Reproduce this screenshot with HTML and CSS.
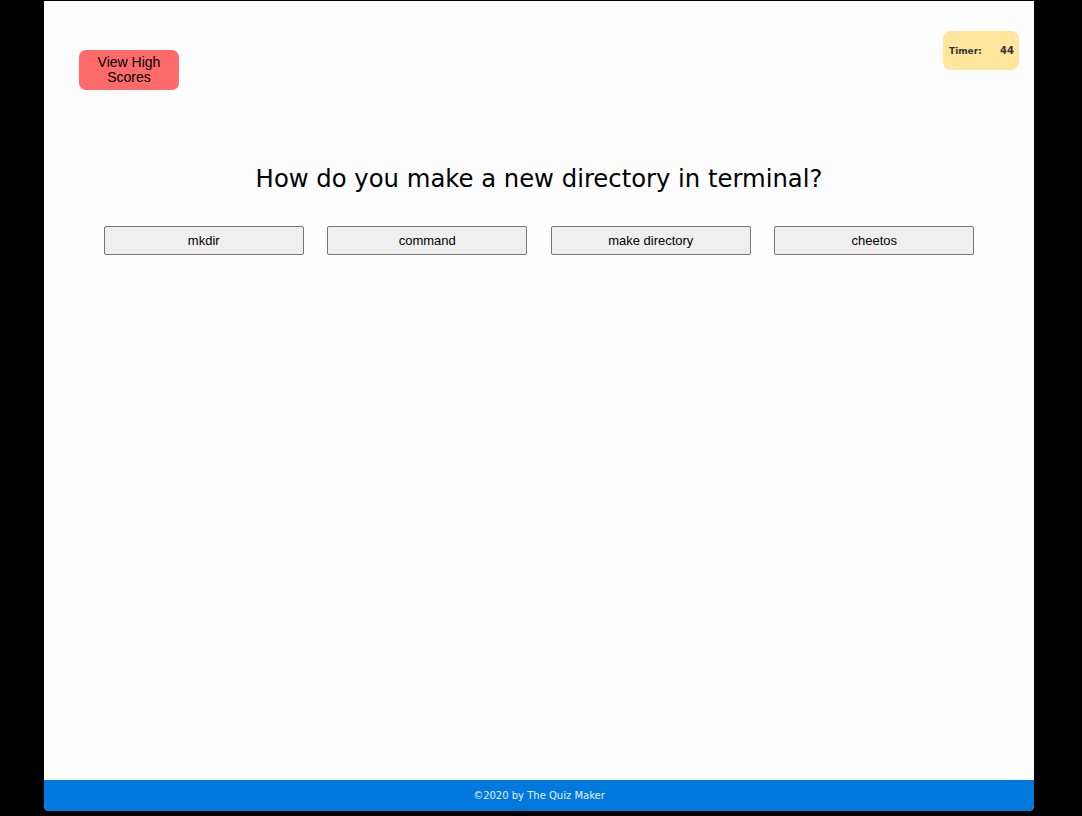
FILE: index.html
```html
<!DOCTYPE html>
<html>
<head>
<meta charset="utf-8">
<link rel="stylesheet" href="styles.css">
</head>
<body>
<div class="page">
  <main class="main">
    <header class="top">
      <button class="scores">View High<br>Scores</button>
      <div class="timer"><span>Timer:</span><span>44</span></div>
    </header>
    <h1 class="question">How do you make a new directory in terminal?</h1>
    <div class="answers">
      <button class="answer">mkdir</button>
      <button class="answer">command</button>
      <button class="answer">make directory</button>
      <button class="answer">cheetos</button>
    </div>
  </main>
  <footer class="footer">©2020 by The Quiz Maker</footer>
</div>
</body>
</html>
```
FILE: styles.css
```css
html, body { margin: 0; padding: 0; }
body { background: #000; height: 816px; overflow: hidden; }
.page {
  margin: 1px 0 0 44px;
  width: 990px;
  height: 810px;
  background: #fdfdfd;
  display: flex;
  flex-direction: column;
  border-radius: 0 0 5px 5px;
  overflow: hidden;
}
.main { flex: 1; }
.top {
  display: flex;
  justify-content: space-between;
  align-items: flex-start;
  padding: 30px 15px 0 35px;
}
.scores {
  margin-top: 19px;
  width: 100px;
  height: 40px;
  background: #ff6b6b;
  border: none;
  border-radius: 7px;
  font-family: "Liberation Sans", Arial, sans-serif;
  font-size: 14px;
  line-height: 15px;
  color: #000;
  padding: 0;
}
.timer {
  width: 76px;
  height: 39px;
  box-sizing: border-box;
  background: #ffe69c;
  border-radius: 8px;
  display: flex;
  justify-content: space-between;
  align-items: center;
  padding: 0 5px 0 6px;
  font-family: Verdana, "DejaVu Sans", sans-serif;
  font-weight: bold;
  font-size: 9px;
  color: #333;
}
.timer span:last-child { font-size: 10px; }
.question {
  margin: 74px 0 0 0;
  text-align: center;
  font-family: Verdana, "DejaVu Sans", sans-serif;
  font-weight: normal;
  font-size: 24.3px;
  line-height: 30px;
  color: #000;
}
.answers {
  display: flex;
  justify-content: center;
  gap: 23.5px;
  margin-top: 32px;
}
.answer {
  width: 200px;
  height: 29px;
  background: #efefef;
  border: 1px solid #767676;
  border-radius: 2px;
  font-family: "Liberation Sans", Arial, sans-serif;
  font-size: 13px;
  color: #000;
  padding: 0;
}
.footer {
  height: 31px;
  background: #0079de;
  color: #e8eef6;
  text-align: center;
  font-family: Verdana, "DejaVu Sans", sans-serif;
  font-size: 10px;
  line-height: 31px;
}
```
